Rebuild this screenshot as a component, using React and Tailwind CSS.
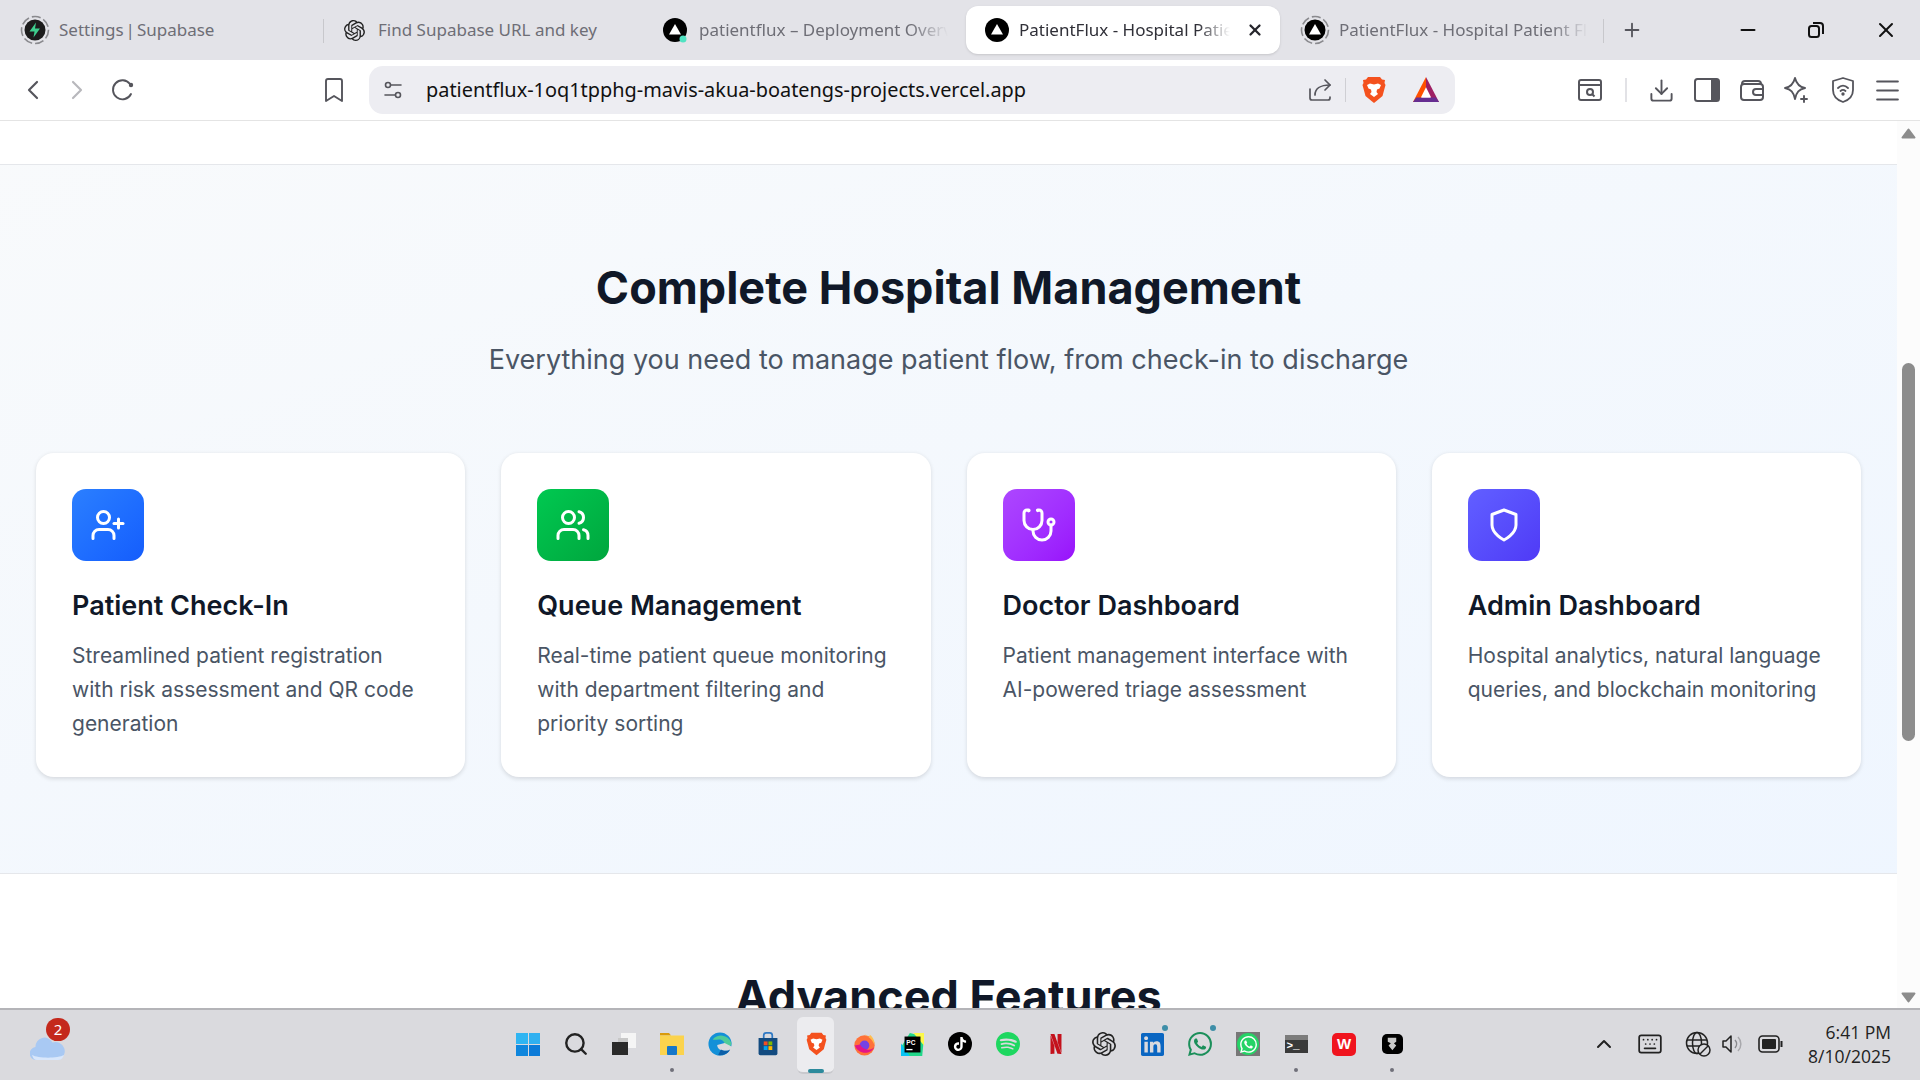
import React from "react";
import { UserPlus, Users, ChevronLeft, ChevronRight, Plus, Minus, X, Download, ChevronUp, Search, Keyboard, Menu } from "lucide-react";
import { SiOpenai, SiTiktok, SiSpotify, SiNetflix, SiLinkedin, SiWhatsapp } from "react-icons/si";

// older lucide shapes, the current package draws these two differently
function StethoscopeIcon({ size, className }) {
  return (
    <svg width={size} height={size} viewBox="0 0 24 24" fill="none" stroke="currentColor" strokeWidth="2" strokeLinecap="round" strokeLinejoin="round" className={className}>
      <path d="M4.8 2.3A.3.3 0 1 0 5 2H4a2 2 0 0 0-2 2v5a6 6 0 0 0 6 6a6 6 0 0 0 6-6V4a2 2 0 0 0-2-2h-1a.2.2 0 1 0 .3.3" />
      <path d="M8 15v1a6 6 0 0 0 6 6a6 6 0 0 0 6-6v-4" />
      <circle cx="20" cy="10" r="2" />
    </svg>
  );
}

function ShieldIcon({ size, className }) {
  return (
    <svg width={size} height={size} viewBox="0 0 24 24" fill="none" stroke="currentColor" strokeWidth="2" strokeLinecap="round" strokeLinejoin="round" className={className}>
      <path d="M12 22s8-4 8-10V5l-8-3-8 3v7c0 6 8 10 8 10z" />
    </svg>
  );
}

const features = [
  {
    title: "Patient Check-In",
    text: "Streamlined patient registration with risk assessment and QR code generation",
    icon: UserPlus,
    color: "from-blue-500 to-blue-600",
  },
  {
    title: "Queue Management",
    text: "Real-time patient queue monitoring with department filtering and priority sorting",
    icon: Users,
    color: "from-green-500 to-green-600",
  },
  {
    title: "Doctor Dashboard",
    text: "Patient management interface with AI-powered triage assessment",
    icon: StethoscopeIcon,
    color: "from-purple-500 to-purple-600",
  },
  {
    title: "Admin Dashboard",
    text: "Hospital analytics, natural language queries, and blockchain monitoring",
    icon: ShieldIcon,
    color: "from-indigo-500 to-indigo-600",
  },
];

function VercelIcon({ ring, dot }) {
  return (
    <svg width="30" height="30" viewBox="0 0 30 30">
      {ring && <circle cx="15" cy="15" r="13.5" fill="none" stroke="#8a8a8e" strokeWidth="1.6" strokeDasharray="9 3" />}
      <circle cx="15" cy="15" r={ring ? 10.5 : 12} fill="#000" />
      <path d="M15 9l6 10.5H9z" fill="#fff" />
      {dot && <circle cx="23" cy="24" r="3.5" fill="#50e3c2" />}
    </svg>
  );
}

function SupabaseIcon() {
  return (
    <svg width="30" height="30" viewBox="0 0 30 30">
      <circle cx="15" cy="15" r="13.5" fill="none" stroke="#8a8a8e" strokeWidth="1.6" strokeDasharray="9 3" />
      <circle cx="15" cy="15" r="10.5" fill="#1c1c1c" />
      <path d="M16 7.5l-6.5 9h5l-1 6 6.5-9h-5z" fill="#3ecf8e" />
    </svg>
  );
}

function BraveIcon({ width = 24, height = 28 }) {
  return (
    <svg width={width} height={height} viewBox="0 0 24 28">
      <path d="M6 1h12l2 2.500 3 .5-.5 3 1 2-3 11-6 5-2.500 2-2.500-2-6-5-3-11 1-2-.5-3 3-.5z" fill="#f4511e" />
      <path d="M5 9l3-1.500 4 1 4-1 3 1.500-1.500 3.500-2.500 1-.5 2.500 1.500 2-4 3-4-3 1.500-2-.5-2.500-2.500-1z" fill="#fff" />
    </svg>
  );
}

function BatIcon() {
  return (
    <svg width="28" height="26" viewBox="0 0 30 28">
      <path d="M15 0L1 27h7l7-13z" fill="#ff5000" />
      <path d="M15 0l14 27h-7l-7-13z" fill="#9e1f63" />
      <path d="M1 27h28l-3.500-5h-21z" fill="#662d91" />
      <path d="M15 11l5.500 11h-11z" fill="#fff" />
    </svg>
  );
}

function Tab({ icon, title, active, sep, fade, tight }) {
  if (active) {
    return (
      <div className="ml-[2px] mr-1 my-[6px] flex w-[314px] shrink-0 items-center rounded-xl bg-white pl-4 pr-4 shadow-sm">
        {icon}
        <span className="ml-[7px] flex-1 overflow-hidden whitespace-nowrap text-[#303038] [mask-image:linear-gradient(to_right,black_85%,transparent)]">{title}</span>
        <X size={18} strokeWidth={3} className="ml-4 text-[#26262c]" />
      </div>
    );
  }
  return (
    <div className="relative flex w-[320px] shrink-0 items-center pl-4 pr-4">
      {icon}
      <span className={`ml-[9px] flex-1 overflow-hidden whitespace-nowrap text-[#6e6e76] ${fade ? "[mask-image:linear-gradient(to_right,black_85%,transparent)]" : ""} ${tight ? "[word-spacing:-2.5px]" : ""}`}>{title}</span>
      {sep && <div className="absolute right-0 top-[19px] h-6 w-px bg-[#c8c8cc]" />}
    </div>
  );
}

function TabBar() {
  return (
    <div className="flex h-[60px] items-stretch bg-[#e3e3e8] pl-1 text-[17px]">
      <Tab icon={<SupabaseIcon />} title="Settings | Supabase" sep tight />
      <Tab icon={<SiOpenai size={21} className="mx-1 text-[#222]" />} title="Find Supabase URL and key" />
      <Tab icon={<VercelIcon dot />} title="patientflux – Deployment Overview" fade />
      <Tab icon={<VercelIcon />} title="PatientFlux - Hospital Patient Flow" active />
      <Tab icon={<VercelIcon ring />} title="PatientFlux - Hospital Patient Flow" fade sep />
      <div className="ml-[17px] flex items-center">
        <Plus size={22} className="text-[#55555c]" />
      </div>
      <div className="ml-auto flex items-center pr-[22px] text-[#111]">
        <Minus size={22} strokeWidth={2.4} />
        <svg width="18" height="18" viewBox="0 0 18 18" fill="none" stroke="currentColor" strokeWidth="2" className="ml-[48px]">
          <rect x="2" y="5" width="10" height="11" rx="2.500" />
          <path d="M6 2h7a3 3 0 0 1 3 3v8" />
        </svg>
        <X size={24} strokeWidth={2} className="ml-[49px]" />
      </div>
    </div>
  );
}

function ToolbarIcon({ children, className = "" }) {
  return <div className={`flex h-8 w-8 shrink-0 items-center justify-center text-[#55555c] ${className}`}>{children}</div>;
}

function Toolbar() {
  const line = { fill: "none", stroke: "currentColor", strokeWidth: 1.9, strokeLinecap: "round", strokeLinejoin: "round" };
  return (
    <div className="flex h-[61px] items-center border-b border-[#e4e4e4] bg-white pl-[17px] pr-[14px]">
      <ToolbarIcon><ChevronLeft size={32} strokeWidth={1.6} /></ToolbarIcon>
      <ToolbarIcon className="ml-3 text-[#b8b8bc]"><ChevronRight size={32} strokeWidth={1.6} /></ToolbarIcon>
      <ToolbarIcon className="ml-[14px]">
        <svg width="26" height="26" viewBox="0 0 26 26" {...line}>
          <path d="M21 17a9.500 9.500 0 1 1-1-10" />
          <circle cx="21" cy="8" r="2.200" fill="currentColor" stroke="none" />
        </svg>
      </ToolbarIcon>
      <ToolbarIcon className="ml-[179px]">
        <svg width="20" height="26" viewBox="0 0 20 26" {...line}>
          <path d="M2 4a2 2 0 0 1 2-2h12a2 2 0 0 1 2 2v20l-8-5-8 5z" />
        </svg>
      </ToolbarIcon>
      <div className="ml-[19px] flex h-12 w-[1086px] shrink-0 items-center rounded-[14px] bg-[#ededf2] pl-[8px] pr-[15px]">
        <ToolbarIcon className="text-[#333]">
          <svg width="20" height="20" viewBox="0 0 20 20" {...line} strokeWidth="1.6">
            <circle cx="5" cy="5" r="2.500" />
            <path d="M8 5h10M2 15h10" />
            <circle cx="15" cy="15" r="2.500" />
          </svg>
        </ToolbarIcon>
        <span className="ml-[17px] flex-1 whitespace-nowrap text-[19.9px] text-[#111]">patientflux-1oq1tpphg-mavis-akua-boatengs-projects.vercel.app</span>
        <ToolbarIcon>
          <svg width="24" height="24" viewBox="0 0 24 24" {...line} strokeWidth="1.7">
            <path d="M2 11v9a2 2 0 0 0 2 2h16a2 2 0 0 0 2-2v-1" />
            <path d="M7 17c0-6 5-10 15-10" />
            <path d="M17 2l5 5-5 5" />
          </svg>
        </ToolbarIcon>
        <div className="ml-[9px] h-6 w-px bg-[#cfcfd4]" />
        <div className="ml-[16px] flex"><BraveIcon /></div>
        <div className="ml-[26px] flex"><BatIcon /></div>
      </div>
      <ToolbarIcon className="ml-[119px]">
        <svg width="26" height="26" viewBox="0 0 26 26" fill="none" stroke="currentColor" strokeWidth="2">
          <rect x="2" y="3" width="22" height="20" rx="2" />
          <path d="M2 8h22" />
          <circle cx="13" cy="15" r="3" />
          <path d="M15 17l2.500 2.500" />
        </svg>
      </ToolbarIcon>
      <div className="ml-[19px] h-6 w-[2px] bg-[#e2e2e6]" />
      <ToolbarIcon className="ml-[18px]"><Download size={27} strokeWidth={1.7} /></ToolbarIcon>
      <ToolbarIcon className="ml-[14px]">
        <svg width="26" height="24" viewBox="0 0 26 24">
          <rect x="1" y="1" width="24" height="22" rx="2.500" fill="none" stroke="currentColor" strokeWidth="2" />
          <rect x="17" y="1" width="8" height="22" fill="currentColor" />
        </svg>
      </ToolbarIcon>
      <ToolbarIcon className="ml-[13px]">
        <svg width="26" height="26" viewBox="0 0 26 26" {...line} strokeWidth="2">
          <path d="M3 7a3 3 0 0 1 3-3h13a3 3 0 0 1 3 3" />
          <rect x="2" y="7" width="22" height="16" rx="3" />
          <path d="M24 12h-7a3 3 0 0 0 0 6h7" />
        </svg>
      </ToolbarIcon>
      <ToolbarIcon className="ml-3">
        <svg width="26" height="28" viewBox="0 0 26 28" {...line} strokeWidth="1.9">
          <path d="M12 2c1.500 6 4 9 10 10-6 1.500-8.500 4-10 11-1.500-7-4-9.500-10-11 6-1 8.500-4 10-10z" />
          <path d="M21 20v6M18 23h6" />
        </svg>
      </ToolbarIcon>
      <ToolbarIcon className="ml-[15px]">
        <svg width="24" height="28" viewBox="0 0 24 28" {...line} strokeWidth="1.8">
          <path d="M12 2l10 3v9c0 6-4 10-10 12C6 24 2 20 2 14V5z" />
          <path d="M7 12c3-3 7-3 10 0M9.500 15c1.500-1.300 3.500-1.300 5 0" />
          <circle cx="12" cy="18" r=".8" fill="currentColor" />
        </svg>
      </ToolbarIcon>
      <ToolbarIcon className="ml-[12px]"><Menu size={31} strokeWidth={1.6} /></ToolbarIcon>
    </div>
  );
}

function FeatureCard({ feature }) {
  const Icon = feature.icon;
  return (
    <div className="rounded-[18px] bg-white p-9 shadow-[0_1.5px_4.5px_rgba(0,0,0,0.12)]">
      <div className={`mb-6 flex h-[72px] w-[72px] items-center justify-center rounded-[14px] bg-gradient-to-br ${feature.color}`}>
        <Icon size={36} className="text-white" />
      </div>
      <h3 className="mb-3 text-[27px] font-semibold leading-[42px] text-[#101828]">{feature.title}</h3>
      <p className="text-[21px] leading-[34px] text-[#4a5565]">{feature.text}</p>
    </div>
  );
}

function Page() {
  return (
    <div className="min-w-0 flex-1 overflow-hidden bg-white font-['Inter',sans-serif]">
      <div className="h-[44px] border-b border-[#e5e7eb]" />
      <section className="border-b border-[#e5e7eb] bg-gradient-to-br from-slate-50 to-blue-50 px-9 py-24">
        <div className="mb-[72px] text-center">
          <h2 className="mb-6 text-[45px] font-bold leading-[54px] text-[#101828]">Complete Hospital Management</h2>
          <p className="text-[27px] leading-[42px] text-[#4a5565]">Everything you need to manage patient flow, from check-in to discharge</p>
        </div>
        <div className="grid grid-cols-4 gap-9">
          {features.map((f) => (
            <FeatureCard key={f.title} feature={f} />
          ))}
        </div>
      </section>
      <section className="px-9 pt-24 text-center">
        <h2 className="text-[45px] font-bold leading-[54px] text-[#101828]">Advanced Features</h2>
      </section>
    </div>
  );
}

function Scrollbar() {
  return (
    <div className="flex w-[23px] shrink-0 flex-col items-center bg-[#fcfcfc] pt-[7px]">
      <svg width="15" height="11" viewBox="0 0 15 11"><path d="M7.500 1.500L13.500 9.500H1.500z" fill="#8c8c8c" stroke="#8c8c8c" strokeWidth="2" strokeLinejoin="round" /></svg>
      <div className="mt-[224px] h-[378px] w-[13px] shrink-0 rounded-full bg-[#8c8c8c]" />
      <svg width="15" height="11" viewBox="0 0 15 11" className="mt-[251px] shrink-0"><path d="M7.500 9.500L13.500 1.500H1.500z" fill="#8c8c8c" stroke="#8c8c8c" strokeWidth="2" strokeLinejoin="round" /></svg>
    </div>
  );
}

function Taskbar() {
  const item = "relative flex h-12 w-12 shrink-0 items-center justify-center";
  const dot = <span className="absolute -bottom-[4px] left-[22px] h-1 w-1 rounded-full bg-[#70707a]" />;
  return (
    <div className="relative flex h-[72px] items-center justify-center border-t-2 border-[#b4b4b8] bg-[#dadade] pb-[2px]">
      <div className="absolute left-[30px] top-[8px] h-[43px] w-[42px]">
        <svg width="36" height="27" viewBox="0 0 36 27" className="absolute bottom-0 left-0">
          <path d="M24 2h6v5h-6z" fill="#e8762c" />
          <path d="M7 26a6.500 6.500 0 0 1-1.500-13 9 9 0 0 1 17-4.500 8 8 0 0 1 6 17.500z" fill="#a9c9f3" />
          <path d="M2 21c6 3.500 26 3.500 32 0-1 3-3 5-6 5H7c-3 0-4-2-5-5z" fill="#d9e7fb" />
        </svg>
        <span className="absolute left-[16px] top-0 flex h-[23px] w-[24px] items-center justify-center rounded-full bg-[#c4291c] text-[15px] text-white">2</span>
      </div>

      <div className={item}>
        <div className="grid h-[23px] w-6 grid-cols-2 gap-[1px]">
          <span className="bg-[#2fb5f2]" />
          <span className="bg-[#30b0f0]" />
          <span className="bg-[#0f86dd]" />
          <span className="bg-[#0c7bd8]" />
        </div>
      </div>
      <div className={item}><Search size={26} strokeWidth={2.2} className="text-[#222]" /></div>
      <div className={item}>
        <svg width="24" height="22" viewBox="0 0 24 22">
          <rect x="9" y="0" width="15" height="15" fill="#f5f5f5" />
          <rect x="6" y="5" width="10" height="10" fill="#c8c8c8" />
          <rect x="0" y="9" width="16" height="13" fill="#2a2a2a" />
        </svg>
      </div>
      <div className={item}>
        <svg width="24" height="22" viewBox="0 0 24 22">
          <path d="M0 0h9l2 2.500H0z" fill="#d99a0c" />
          <rect x="0" y="2.500" width="24" height="19.500" fill="#fbd34d" />
          <rect x="7" y="13" width="10" height="9" rx="1" fill="#1677c9" />
        </svg>
        {dot}
      </div>
      <div className={item}>
        <svg width="24" height="24" viewBox="0 0 26 26">
          <circle cx="13" cy="13" r="12.500" fill="#1390d8" />
          <path d="M5 8a12 12 0 0 1 20 3c1 3-1 6-5 6.500-3 .5-5-.5-5-1.500 2 0 3-1 3-3 0-3-3-5-6-5-3 0-5 1-7 0z" fill="#4ecb9a" />
          <path d="M10 14c0 4 4 7 9 6l6 1 1-5-8-4z" fill="#dadade" />
          <path d="M11 25c6 1 11-2 13-6-3 2-7 2-10 0z" fill="#0c5fa8" />
        </svg>
      </div>
      <div className={item}>
        <svg width="24" height="24" viewBox="0 0 24 28">
          <path d="M7 7V4a3 3 0 0 1 3-3h4a3 3 0 0 1 3 3v3" fill="none" stroke="#2f79c4" strokeWidth="2" />
          <path d="M1 7h22v18a2 2 0 0 1-2 2H3a2 2 0 0 1-2-2z" fill="#134b80" />
          <rect x="7" y="11" width="4.500" height="4.500" fill="#f25022" />
          <rect x="12.500" y="11" width="4.500" height="4.500" fill="#7fba00" />
          <rect x="7" y="16.500" width="4.500" height="4.500" fill="#00a4ef" />
          <rect x="12.500" y="16.500" width="4.500" height="4.500" fill="#ffb900" />
        </svg>
      </div>
      <div className={item}>
        <div className="absolute -top-[3px] left-[5px] h-[57px] w-[37px] rounded-md border-b-2 border-[#c9c9cd] bg-[#ececef]" />
        <div className="relative flex"><BraveIcon width={21} height={24} /></div>
        <span className="absolute -bottom-[5px] left-[16px] h-1 w-4 rounded-full bg-[#2c8a9c]" />
      </div>
      <div className={item}>
        <svg width="23" height="25" viewBox="0 0 26 28">
          <circle cx="13" cy="15" r="11.500" fill="#ff7139" />
          <path d="M13 2c4 3 9 6 11 12 1-4-2-9-5-11 0 3-3 3-6-1z" fill="#ffbd4f" />
          <circle cx="13" cy="15" r="5.500" fill="#7542e5" />
          <path d="M2 15c3 9 17 12 22 2-5 5-13 3-16-3z" fill="#e31587" />
        </svg>
      </div>
      <div className={item}>
        <svg width="23" height="23" viewBox="0 0 26 26">
          <path d="M0 16L10 0l16 4-2 22H2z" fill="#21d789" />
          <path d="M14 0h12v14z" fill="#fcf84a" />
          <path d="M0 12l10 14H0z" fill="#07c3f2" />
          <rect x="4" y="4" width="18" height="18" fill="#000" />
          <rect x="6" y="18" width="7" height="1.500" fill="#fff" />
          <text x="6" y="13" fontSize="7.500" fontWeight="700" fill="#fff" fontFamily="Liberation Sans">PC</text>
        </svg>
      </div>
      <div className={item}>
        <div className="flex h-6 w-6 items-center justify-center rounded-full bg-black">
          <SiTiktok size={14} className="text-white" />
        </div>
      </div>
      <div className={item}><SiSpotify size={24} className="text-[#1ed760]" /></div>
      <div className={item}><SiNetflix size={20} className="text-[#c4111c]" /></div>
      <div className={item}><SiOpenai size={24} className="text-[#222]" /></div>
      <div className={item}>
        <SiLinkedin size={23} className="text-[#0a66c2]" />
        <span className="absolute left-[34px] top-[5px] h-[6px] w-[6px] rounded-full bg-[#3e8ea8]" />
      </div>
      <div className={item}>
        <SiWhatsapp size={24} className="text-[#1b8f5a]" />
        <span className="absolute left-[34px] top-[5px] h-[6px] w-[6px] rounded-full bg-[#3e8ea8]" />
      </div>
      <div className={item}>
        <div className="flex h-6 w-6 items-center justify-center bg-[#777]">
          <div className="flex h-[22px] w-[22px] items-center justify-center rounded-full bg-[#25d366]">
            <SiWhatsapp size={17} className="text-white" />
          </div>
        </div>
      </div>
      <div className={item}>
        <div className="flex h-[18px] w-[23px] flex-col overflow-hidden bg-[#3a3a3a]">
          <div className="h-[5px] shrink-0 bg-[#7c7c7c]" />
          <span className="pl-[2px] font-['Liberation_Mono',monospace] text-[11px] font-bold leading-[12px] text-white">&gt;_</span>
        </div>
        {dot}
      </div>
      <div className={item}>
        <div className="flex h-[23px] w-6 items-center justify-center rounded-[5px] bg-[#f0141e] font-['Liberation_Sans',sans-serif] text-[15px] font-bold text-white">W</div>
      </div>
      <div className={item}>
        <div className="flex h-5 w-[21px] items-center justify-center rounded-[5px] bg-black">
          <svg width="10" height="14" viewBox="0 0 13 18"><path d="M1 1h11v5l-3 2 3 3-5 6-5-6 3-3-4-2z" fill="#c8c8c8" /></svg>
        </div>
        {dot}
      </div>

      <div className="absolute right-[29px] top-0 flex h-full items-center pb-[2px] font-['Open_Sans',sans-serif] text-[#222]">
        <ChevronUp size={24} strokeWidth={2} />
        <Keyboard size={26} strokeWidth={1.6} className="ml-[21px]" />
        <svg width="26" height="26" viewBox="0 0 26 26" fill="none" stroke="#222" strokeWidth="1.500" className="ml-[22px]">
          <circle cx="12" cy="12" r="10.500" />
          <ellipse cx="12" cy="12" rx="4.500" ry="10.500" />
          <path d="M2 9h20M2 15h20" />
          <circle cx="19" cy="19" r="6" fill="#dadade" />
          <path d="M15 23l8-8" />
        </svg>
        <svg width="24" height="24" viewBox="0 0 24 24" fill="none" stroke="#222" strokeWidth="1.500" strokeLinejoin="round" className="ml-[9px]">
          <path d="M3 9v6h3l5 5V4L6 9z" />
          <path d="M15 8a6 6 0 0 1 0 8" stroke="#8a8a8e" />
          <path d="M18 5a10 10 0 0 1 0 14" stroke="#a8a8ac" />
        </svg>
        <svg width="26" height="18" viewBox="0 0 26 18" className="ml-[14px]">
          <rect x="1" y="1" width="20" height="16" rx="3.500" fill="none" stroke="#222" strokeWidth="1.600" />
          <rect x="4" y="4" width="14" height="10" rx="1" fill="#222" />
          <rect x="22.500" y="6" width="2" height="6" fill="#222" />
        </svg>
        <div className="ml-[24px] text-right text-[17.5px] leading-[24px]">
          <div>6:41 PM</div>
          <div>8/10/2025</div>
        </div>
      </div>
    </div>
  );
}

export default function App() {
  return (
    <div className="flex h-screen w-screen flex-col overflow-hidden font-['Noto_Sans',sans-serif]">
      <TabBar />
      <Toolbar />
      <div className="flex min-h-0 flex-1">
        <Page />
        <Scrollbar />
      </div>
      <Taskbar />
    </div>
  );
}
